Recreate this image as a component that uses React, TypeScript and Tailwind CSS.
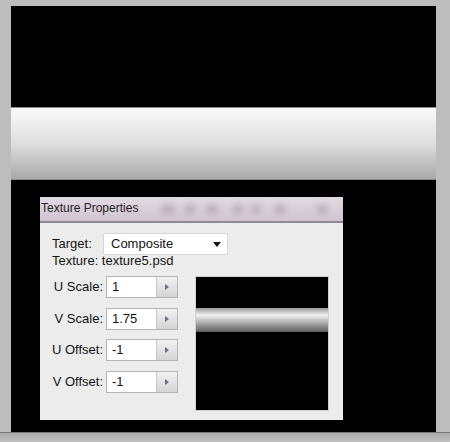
import React from 'react';

const rows = [
  { label: 'U Scale:', value: '1' },
  { label: 'V Scale:', value: '1.75' },
  { label: 'U Offset:', value: '-1' },
  { label: 'V Offset:', value: '-1' },
];

function SpinField({ label, value }: { label: string; value: string }) {
  return (
    <div className="flex items-center h-[22px]">
      <span className="w-[66px] text-right pr-[3px]">{label}</span>
      <div className="flex h-[22px] w-[72px] border border-[#b4b4b4] bg-white">
        <span className="flex-1 pl-[5px] leading-[20px]">{value}</span>
        <div className="w-[21px] flex items-center justify-center border-l border-[#c8c8c8] bg-gradient-to-b from-[#f2f2f2] to-[#d4d4d4]">
          <svg width="4" height="6" viewBox="0 0 4 6">
            <path d="M0 0 L4 3 L0 6 Z" fill="#6b6f8a" />
          </svg>
        </div>
      </div>
    </div>
  );
}

export default function App() {
  return (
    <div
      className="w-[450px] h-[442px] bg-[#bdbdbd] flex flex-col overflow-hidden"
      style={{ fontFamily: '"Liberation Sans", Arial, sans-serif' }}
    >
      <div className="h-[6px] shrink-0" />
      <div className="ml-[11px] w-[425px] h-[426px] shrink-0 bg-black flex flex-col overflow-hidden">
        {/* scene: top void + lit bar */}
        <div className="h-[101px] shrink-0" />
        <div className="h-[73px] shrink-0 border-y border-[#8a8a8a] bg-gradient-to-b from-[#fafafa] via-[#dedede] to-[#a9a9a9]" />

        <div className="pl-[29px] pt-[17px]">
          <div className="w-[303px] h-[223px] bg-[#ececec] text-[13px] text-[#141414] flex flex-col">
            {/* title bar */}
            <div className="relative h-[26px] shrink-0 border-b-2 border-[#8f8a90] bg-gradient-to-b from-[#e2dae3] to-[#cfc4d0] overflow-hidden">
              <svg className="absolute inset-0" width="303" height="24">
                <defs>
                  <filter id="blur" x="-50%" y="-50%" width="200%" height="200%">
                    <feGaussianBlur stdDeviation="3" />
                  </filter>
                </defs>
                <g filter="url(#blur)" fill="#9e8f9f" opacity="0.5">
                  <ellipse cx="128" cy="12" rx="8" ry="5" />
                  <ellipse cx="150" cy="12" rx="6" ry="5" />
                  <ellipse cx="172" cy="12" rx="7" ry="5" />
                  <ellipse cx="198" cy="12" rx="6" ry="5" />
                  <ellipse cx="216" cy="12" rx="5" ry="5" />
                  <ellipse cx="240" cy="12" rx="6" ry="5" />
                  <ellipse cx="282" cy="12" rx="6" ry="5" />
                </g>
              </svg>
              <span className="relative block pl-[1px] pt-[4px] text-[12px] leading-[14px] text-[#222]">
                Texture Properties
              </span>
            </div>

            {/* body */}
            <div className="pl-[12px] pt-[10px]">
              <div className="flex items-center h-[22px]">
                <span className="w-[51px]">Target:</span>
                <div className="flex items-center justify-between w-[125px] h-[22px] bg-white border border-[#d6d6d6] pl-[7px] pr-[6px]">
                  <span>Composite</span>
                  <svg width="8" height="5" viewBox="0 0 8 5">
                    <path d="M0 0 L8 0 L4 5 Z" fill="#111" />
                  </svg>
                </div>
              </div>
              <div className="h-[14px] leading-[14px] mt-[-1px]">Texture: texture5.psd</div>
            </div>

            <div className="flex pt-[8px]">
              <div className="flex flex-col gap-[9.5px]">
                {rows.map(r => (
                  <SpinField key={r.label} label={r.label} value={r.value} />
                ))}
              </div>
              <div className="ml-[17px] w-[134px] h-[135px] bg-black border border-[#d0d0d0] flex flex-col">
                <div className="h-[31px] shrink-0" />
                <div className="h-[24px] shrink-0 bg-gradient-to-b from-[#9a9a9a] via-[#f2f2f2] via-30% to-[#5e5e5e]" />
              </div>
            </div>
          </div>
        </div>
      </div>
      <div className="flex-1 border-t border-[#7a7a7a] bg-gradient-to-b from-[#a8a8a8] to-[#c2c2c2]" />
    </div>
  );
}
